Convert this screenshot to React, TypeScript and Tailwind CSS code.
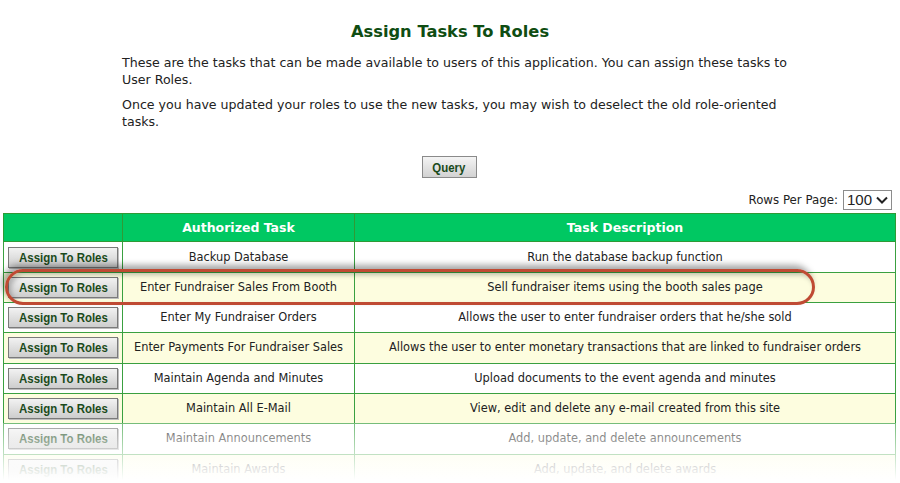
import React from 'react';

const rows = [
  { task: 'Backup Database', desc: 'Run the database backup function' },
  { task: 'Enter Fundraiser Sales From Booth', desc: 'Sell fundraiser items using the booth sales page' },
  { task: 'Enter My Fundraiser Orders', desc: 'Allows the user to enter fundraiser orders that he/she sold' },
  { task: 'Enter Payments For Fundraiser Sales', desc: 'Allows the user to enter monetary transactions that are linked to fundraiser orders' },
  { task: 'Maintain Agenda and Minutes', desc: 'Upload documents to the event agenda and minutes' },
  { task: 'Maintain All E-Mail', desc: 'View, edit and delete any e-mail created from this site' },
  { task: 'Maintain Announcements', desc: 'Add, update, and delete announcements' },
  { task: 'Maintain Awards', desc: 'Add, update, and delete awards' },
];

function GrayButton({ children }: { children: React.ReactNode }) {
  return (
    <button className="h-[21px] w-[110px] border border-[#7a7a7a] bg-gradient-to-b from-[#f2f2f2] to-[#cdcdcd] text-[13px] font-bold text-[#1a4a1a] [font-family:'Liberation_Sans',Arial,sans-serif] shadow-[1px_1px_0_#bdbdbd]">
      <span className="inline-block scale-x-[0.88]">{children}</span>
    </button>
  );
}

export default function App() {
  return (
    <div className="relative h-[483px] w-[900px] overflow-hidden bg-white text-[#222] [font-family:'DejaVu_Sans',Verdana,sans-serif]">
      <h1 className="pt-[20px] text-center text-[16.3px] font-bold text-[#0f4d12]">Assign Tasks To Roles</h1>

      <div className="ml-[122px] mt-[10px] w-[672px] text-[12.6px] leading-[17px]">
        <p>
          These are the tasks that can be made available to users of this application. You can assign these tasks to
          User Roles.
        </p>
        <p className="mt-[8px]">
          Once you have updated your roles to use the new tasks, you may wish to deselect the old role-oriented
          tasks.
        </p>
      </div>

      <div className="mt-[26px] flex justify-center">
        <button className="ml-[-2px] h-[22px] w-[55px] border border-[#8a8a8a] bg-gradient-to-b from-[#f4f4f4] to-[#d2d2d2] text-[13px] font-bold text-[#1a4a1a] [font-family:'Liberation_Sans',Arial,sans-serif]">
          <span className="inline-block scale-x-[0.88]">Query</span>
        </button>
      </div>

      <div className="mr-[8px] mt-[12px] flex items-center justify-end gap-[5px] text-[11.8px]">
        <span>Rows Per Page:</span>
        <div className="flex h-[20px] w-[49px] items-center justify-between border border-[#8c8c8c] pl-[3px] pr-[3px] text-[15px] [font-family:'Liberation_Sans',Arial,sans-serif]">
          <span>100</span>
          <svg width="12" height="8" viewBox="0 0 12 8" fill="none" stroke="#222" strokeWidth="2">
            <path d="M1 1.5 6 6.5 11 1.5" />
          </svg>
        </div>
      </div>

      <table className="ml-[3px] mt-[3px] w-[893px] border-collapse text-[11.4px]">
        <thead>
          <tr className="h-[28px] bg-[#00c862] text-[12.5px] font-bold text-white">
            <th className="w-[119px] border border-[#2f9a35]"></th>
            <th className="w-[232px] border border-[#2f9a35]">Authorized Task</th>
            <th className="border border-[#2f9a35]">Task Description</th>
          </tr>
        </thead>
        <tbody>
          {rows.map((r, i) => (
            <tr key={r.task} className={`h-[30.3px] ${i % 2 === 1 ? 'bg-[#fdfddf]' : 'bg-white'}`}>
              <td className="border border-[#3aa040] text-center">
                <GrayButton>Assign To Roles</GrayButton>
              </td>
              <td className="border border-[#3aa040] text-center">{r.task}</td>
              <td className="border border-[#3aa040] text-center">{r.desc}</td>
            </tr>
          ))}
        </tbody>
      </table>

      {/* bottom fade */}
      <div className="pointer-events-none absolute bottom-0 left-0 h-[60px] w-full bg-gradient-to-b from-white/30 to-white to-95%"></div>

      {/* highlight oval */}
      <div className="pointer-events-none absolute left-[5px] top-[269px] h-[36px] w-[810px] rounded-full border-[3px] border-[#bf4a33] shadow-[-3px_-4px_6px_rgba(0,0,0,0.35),inset_3px_3px_5px_rgba(0,0,0,0.25)]"></div>
    </div>
  );
}
